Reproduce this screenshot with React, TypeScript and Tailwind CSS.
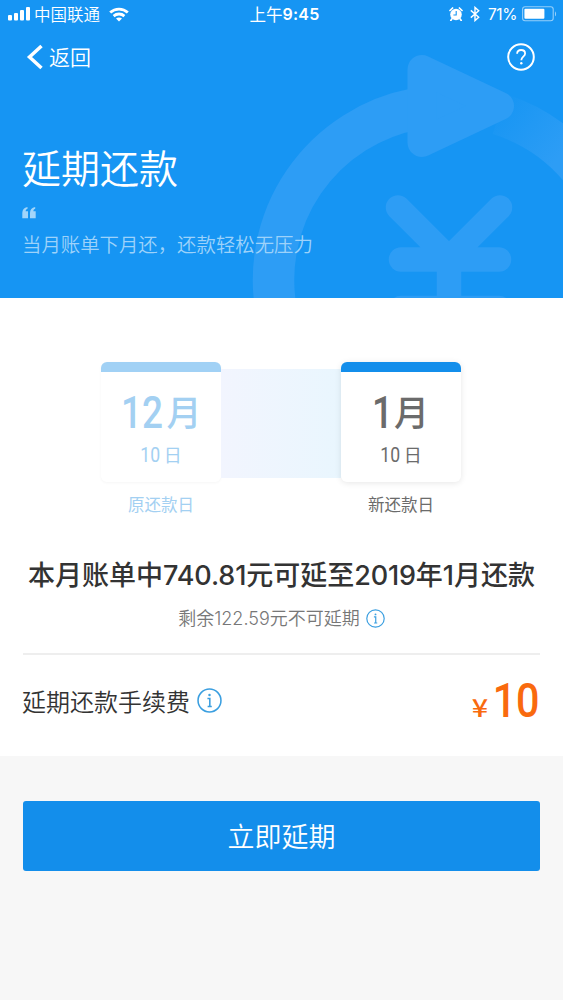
import type { ReactNode } from "react";
import { clsx } from "clsx";

interface CalendarCardProps {
  month: string;
  day: string;
  caption: string;
  muted?: boolean;
}

function StatusBar() {
  return (
    <div className="flex h-7 items-center justify-between pr-[6px] pl-2 text-[16px] leading-7">
      <div className="flex w-[200px] items-center">
        <svg width="23" height="14" viewBox="0 0 23 14" fill="currentColor" aria-hidden>
          <rect x="0" y="8" width="4" height="5.5" rx="1" />
          <rect x="6" y="6" width="4" height="7.5" rx="1" />
          <rect x="12" y="3" width="4" height="10.5" rx="1" />
          <rect x="18" y="0" width="4" height="13.5" rx="1" />
        </svg>
        <span className="ml-[3px] w-[67px] text-[16.5px] font-[350] whitespace-nowrap">中国联通</span>
        <svg className="ml-2" width="20" height="15" viewBox="0 0 20 15" fill="none" stroke="currentColor" strokeWidth="2.8" aria-hidden>
          <path d="M1.2 5.6C6.2.9 13.8.9 18.8 5.6" />
          <path d="M4.6 9.1c3.1-2.8 7.7-2.8 10.8 0" />
          <path d="M7 11.6c1.7-1.5 4.3-1.5 6 0l-3 2.9z" fill="currentColor" stroke="none" />
        </svg>
      </div>
      <div className="flex items-center pl-[4px] whitespace-nowrap">
        <span className="text-[16.5px]">上午</span>
        <span className="font-[Inter] text-[16px] font-semibold tracking-[0.2px]">9:45</span>
      </div>
      <div className="flex w-[200px] items-center justify-end">
        <svg width="14" height="14" viewBox="0 0 14 14" aria-hidden>
          <circle cx="7" cy="7.5" r="5.8" fill="currentColor" />
          <path d="M1 3.5 3.6 1M13 3.5 10.4 1M2.8 12 1.8 13.4M11.2 12l1 1.4" stroke="currentColor" strokeWidth="1.7" strokeLinecap="round" />
          <path d="M7.2 4v4H4.4" fill="none" stroke="#1695f3" strokeWidth="1.1" />
        </svg>
        <svg className="ml-[7px]" width="10" height="16" viewBox="0 0 10 16" fill="none" stroke="currentColor" strokeWidth="1.4" aria-hidden>
          <path d="M.8 4.4 8.7 11.3 5 14.6V1.4l3.7 3.3L.8 11.6" />
        </svg>
        <span className="ml-2 w-[30px] pt-px font-[Inter] text-[15.5px] tracking-[-0.4px]">71%</span>
        <svg className="ml-[4px]" width="35" height="16" viewBox="0 0 35 16" aria-hidden>
          <rect x=".6" y=".8" width="30.6" height="14" rx="2.5" fill="none" stroke="currentColor" strokeOpacity=".55" strokeWidth="1.1" />
          <rect x="2.4" y="2.8" width="20" height="10" rx="1" fill="currentColor" />
          <path d="M33 5.5c1.4.6 1.4 4.2 0 4.8z" fill="currentColor" opacity=".55" />
        </svg>
      </div>
    </div>
  );
}

function HeaderArtwork() {
  return (
    <svg className="absolute inset-0" width="563" height="298" viewBox="0 0 563 298" fill="none" aria-hidden>
      <defs>
        <linearGradient id="tail" gradientUnits="userSpaceOnUse" x1="500" y1="98" x2="565" y2="150">
          <stop offset="0" stopColor="#2d9df5" stopOpacity="0" />
          <stop offset="1" stopColor="#2d9df5" />
        </linearGradient>
      </defs>
      <path d="M276.5 312A174 174 0 0 1 415 109" stroke="#2d9df5" strokeWidth="41.5" />
      <path d="M499 114A174 174 0 0 1 590 181" stroke="url(#tail)" strokeWidth="42" />
      <path d="M422 69.5v73L499.5 106z" fill="#2d9df5" stroke="#2d9df5" strokeWidth="29" strokeLinejoin="round" />
      <g stroke="#2d9df5" strokeWidth="24.5" strokeLinecap="round">
        <path d="M398 207.500l51 51 51-51M449 259v60M401 259.500h98M401 308h98" />
      </g>
    </svg>
  );
}

function InfoIcon({ size }: { size: number }) {
  return (
    <svg width={size} height={size} viewBox="0 0 24 24" fill="none" stroke="#3b9fe0" strokeWidth="1.5" aria-hidden>
      <circle cx="12" cy="12" r="11" />
      <path d="M10 10h2.300v7.500M10.200 17.700h4" />
      <circle cx="12" cy="6.800" r="1.200" fill="#3b9fe0" stroke="none" />
    </svg>
  );
}

function Digits({ className, children }: { className?: string; children: ReactNode }) {
  return <span className={clsx("inline-block font-[Roboto]", className)}>{children}</span>;
}

function CalendarCard({ month, day, caption, muted }: CalendarCardProps) {
  return (
    <div className={clsx("flex w-[120px] flex-col items-center", muted ? "text-[#a3d0f2]" : "text-[#6b6b6b]")}>
      <div
        className={clsx(
          "h-[120px] w-full overflow-hidden rounded-[6px] bg-white",
          muted ? "shadow-[0_1px_3px_rgba(0,0,0,0.04)]" : "shadow-[0_1px_6px_rgba(0,0,0,0.1)]",
        )}
      >
        <div className={clsx("h-[10px]", muted ? "bg-[#a1d1f5]" : "bg-[#138eeb]")} />
        <div className="flex h-[64px] items-center justify-center pt-[18px] pr-[3px] leading-none">
          <Digits className="mt-px scale-x-[0.84] text-[44px] font-medium">{month}</Digits>
          <span className="-mt-[4px] -ml-px text-[35px] font-medium">月</span>
        </div>
        <div className="flex h-[38px] items-center justify-center pr-px leading-none">
          <Digits className="mr-[2px] scale-x-[0.88] text-[20px]">{day}</Digits>
          <span className="-mt-[2px] text-[18px]">日</span>
        </div>
      </div>
      <div className="mt-[10px] text-[16.5px] leading-[24px]">{caption}</div>
    </div>
  );
}

export default function App() {
  return (
    <div className="flex h-[1000px] w-[563px] flex-col overflow-hidden bg-[#f7f7f7] font-['Noto_Sans_CJK_SC',sans-serif]">
      <header className="relative h-[298px] bg-[#1695f3] text-white">
        <HeaderArtwork />
        <div className="relative">
          <StatusBar />
          <div className="flex h-[58px] items-center justify-between pr-[28px] pl-[26px]">
            <div className="flex items-center">
              <svg width="17" height="26" viewBox="0 0 17 26" fill="none" stroke="currentColor" strokeWidth="3.5" aria-hidden>
                <path d="M15.5 2 3.5 13l12 11" />
              </svg>
              <span className="-mt-px ml-[6px] text-[21px] leading-none font-[350]">返回</span>
            </div>
            <svg width="28" height="28" viewBox="0 0 28 28" fill="none" stroke="currentColor" aria-hidden>
              <circle cx="14" cy="14" r="12.8" strokeWidth="2" />
              <path d="M10.100 10.700c.1-2.200 1.700-3.700 4-3.700s4 1.400 4 3.500c0 3.200-3.800 3.200-3.800 6.700" strokeWidth="1.8" />
              <circle cx="14.3" cy="20.3" r="1.2" fill="currentColor" stroke="none" />
            </svg>
          </div>
          <div className="px-[22px] pt-[52px]">
            <h1 className="text-[39px] leading-[56px] font-[350]">延期还款</h1>
            <svg className="mt-[13px]" width="14" height="12" viewBox="0 0 14 12" fill="#a2d5fa" aria-hidden>
              <path d="M5.500 0v1.800C4 2.300 3.800 3 3.700 4.200H6v7H.3V6C.3 2.700 2 .5 5.500 0zM13.200 0v1.800c-1.500.5-1.700 1.200-1.800 2.400h2.300v7H8V6C8 2.700 9.700.5 13.200 0z" />
            </svg>
            <p className="mt-[11px] text-[19.4px] leading-[28px] font-[350] whitespace-nowrap text-[#9dd2fa]">当月账单下月还，还款轻松无压力</p>
          </div>
        </div>
      </header>

      <main className="flex h-[458px] flex-col bg-white px-[23px]">
        <div className="flex justify-center pt-[63.5px] pr-[1px]">
          <CalendarCard month="12" day="10" caption="原还款日" muted />
          <div className="mt-[7px] h-[109px] w-[120px] bg-linear-to-r from-[#f2f5fe] to-[#e9f6fe]" />
          <CalendarCard month="1" day="10" caption="新还款日" />
        </div>
        <h2 className="-mx-2 mt-[38.5px] text-center text-[27px] leading-[40px] font-medium whitespace-nowrap text-[#333]">
          本月账单中<span className="font-[Inter] tracking-[-0.1px]">740.81</span>元可延至
          <span className="font-[Inter] tracking-[-0.2px]">2019</span>年<span className="font-[Inter]">1</span>月还款
        </h2>
        <div className="mt-[8px] flex h-[28px] items-center justify-center text-[18px] leading-[28px] font-[350] text-[#777]">
          <span>
            剩余<span className="font-[Inter] font-light">122.59</span>元不可延期
          </span>
          <span className="ml-[6px]">
            <InfoIcon size={19} />
          </span>
        </div>
        <div className="mt-[21px] h-[1.5px] bg-[#eee]" />
        <div className="flex h-[95px] items-center justify-between">
          <div className="flex items-center text-[24px] leading-none font-[350] text-[#333]">
            <span className="-mt-[3px] -ml-px">延期还款手续费</span>
            <span className="-mt-[4px] ml-[7px]">
              <InfoIcon size={25} />
            </span>
          </div>
          <div className="-mt-[3px] flex items-baseline text-[#f96a0e]">
            <span className="-mr-[3px] origin-right scale-x-[1.15] text-[25px] leading-none font-medium">¥</span>
            <Digits className="origin-right scale-x-[0.86] text-[48px] leading-none font-medium">10</Digits>
          </div>
        </div>
      </main>

      <div className="px-[23px] pt-[45px]">
        <button type="button" className="h-[70px] w-full rounded-[3px] bg-[#138eeb] text-[27px] font-[350] text-white">
          立即延期
        </button>
      </div>
    </div>
  );
}
